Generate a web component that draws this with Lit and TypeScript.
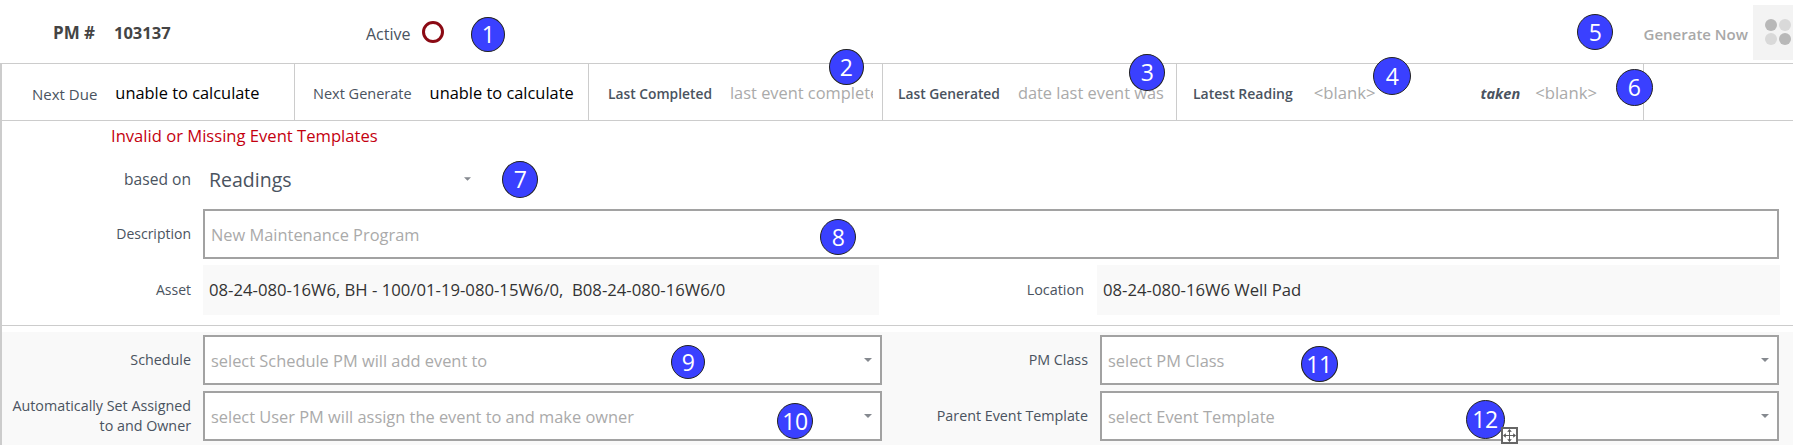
import { LitElement, html, css } from "lit";
import { customElement } from "lit/decorators.js";

const BADGES: [number, number, number, number, number][] = [
  [1, 488, 34, 34, 35],
  [2, 846, 67, 35, 36],
  [3, 1147, 72, 36, 37],
  [4, 1392, 76, 38, 38],
  [5, 1595, 32, 36, 36],
  [6, 1634, 87, 37, 37],
  [7, 520, 179, 36, 37],
  [8, 838, 237, 36, 36],
  [9, 688, 362, 34, 34],
  [10, 795, 421, 36, 36],
  [11, 1319, 364, 37, 36],
  [12, 1485, 419, 39, 39],
];

const caret = html`<svg class="caret" width="8" height="4" viewBox="0 0 8 4"><path d="M0 0H8L4 4Z" fill="#85898f"/></svg>`;

@customElement("app-root")
export class AppRoot extends LitElement {
  static styles = css`
    :host {
      display: block;
      position: relative;
      width: 1793px;
      height: 445px;
      overflow: hidden;
      background: #fff;
      font-family: "Open Sans", "Noto Sans", sans-serif;
      color: #4a5360;
      font-size: 14px;
    }
    .head {
      height: 63px;
      box-sizing: border-box;
      display: flex;
      align-items: center;
    }
    .pm-label { margin-left: 53px; width: 61px; font-weight: 700; font-size: 17px; color: #444; padding-top: 2px; }
    .pm-no { font-weight: 700; font-size: 16.5px; color: #444; width: 252px; padding-top: 1px; }
    .active { font-size: 16px; width: 56px; padding-top: 4px; }
    .ring { width: 22px; height: 22px; box-sizing: border-box; border: 3px solid #8b0a14; border-radius: 50%; margin-top: 1px; }
    .gen { margin-left: auto; font-size: 15px; font-weight: 600; color: #a8a8a8; margin-right: 5px; padding-top: 4px; }
    .apps {
      width: 40px;
      height: 55px;
      align-self: flex-start;
      margin-top: 5px;
      background: #f3f3f3;
      display: grid;
      grid-template-columns: 12px 12px;
      grid-auto-rows: 12px;
      gap: 2px;
      align-content: center;
      padding: 0 0 2px 12px;
      box-sizing: border-box;
    }
    .apps i { border-radius: 50%; background: #d9d9d9; }
    .apps i.d { background: #b8b8b8; }

    .stats {
      height: 58px;
      box-sizing: border-box;
      border-top: 1px solid #ccc;
      border-bottom: 1px solid #ccc;
      border-left: 2px solid #ccc;
      display: flex;
    }
    .cell {
      width: 294px;
      flex: none;
      box-sizing: border-box;
      border-right: 1px solid #ccc;
      display: flex;
      align-items: center;
      gap: 18px;
      white-space: nowrap;
    }
    .c1 { width: 293px; padding-left: 30px; font-size: 15px; }
    .c2 { padding-left: 18px; font-size: 14.5px; }
    .c3 { padding-left: 19px; font-size: 13.8px; }
    .c4 { padding-left: 15px; font-size: 13.8px; }
    .c5 { width: 467px; padding-left: 16px; }
    .cell > span { padding-top: 3px; }
    .cell .val { font-size: 16.4px; color: #000; padding-top: 0; }
    .cell .ph { font-size: 16.4px; color: #aaa; padding-top: 0; }
    .c3 .ph { overflow: hidden; width: 143px; flex: none; }
    .cell .s { font-weight: 600; }
    .c5 .s { margin-right: 3px; }
    .c5 .ph { font-size: 16.7px; }
    .cell .taken { font-weight: 700; font-style: italic; font-size: 14.5px; margin-left: 87px; margin-right: -3px; }

    .form {
      border-left: 2px solid #ccc;
      height: 325px;
      box-sizing: border-box;
    }
    .upper { height: 205px; box-sizing: border-box; border-bottom: 1px solid #ccc; }
    .err { color: #c4000f; font-size: 16.6px; font-weight: 500; padding-left: 109px; height: 33px; line-height: 30px; }
    .row { display: flex; align-items: center; padding-right: 14px; }
    .lbl { width: 189px; flex: none; text-align: right; line-height: 20px; }
    .based { height: 55px; padding-bottom: 5px; box-sizing: border-box; }
    .based .lbl { font-size: 15.6px; }
    .based .pick {
      margin-left: 12px;
      width: 268px;
      padding-left: 6px;
      display: flex;
      align-items: center;
      justify-content: space-between;
      box-sizing: border-box;
      font-size: 19.5px;
      font-weight: 500;
    }
    .box {
      border: 2px solid #a2a2a2;
      height: 50px;
      box-sizing: border-box;
      background: #fff;
      display: flex;
      align-items: center;
      justify-content: space-between;
      padding: 0 8px 0 6px;
      color: #aaa;
      font-size: 16.4px;
      margin-left: 12px;
    }
    .desc { flex: 1; }
    .assets { display: flex; align-items: center; margin-top: 6px; }
    .assets .lbl { font-weight: 500; }
    .ro {
      height: 50px;
      background: #f9f9f9;
      display: flex;
      align-items: center;
      padding: 0 0 1px 6px;
      box-sizing: border-box;
      color: #333;
      font-size: 16.7px;
      margin-left: 12px;
      white-space: pre;
    }
    .ro.a { width: 676px; }
    .ro.b { width: 683px; margin-left: 13px; }
    .lbl.l2 { width: 205px; font-size: 14.4px; }
    .lower {
      margin-top: 6px;
      background: #f9f9f9;
      height: 113px;
      padding-top: 3px;
      box-sizing: border-box;
      display: grid;
      grid-template-columns: 191px 689px 208px 689px;
      grid-auto-rows: 50px;
      row-gap: 6px;
      align-items: center;
    }
    .lower .box { margin-left: 10px; }
    .lower .lbl { width: auto; padding-right: 2px; font-size: 14.3px; }

    .badge {
      position: absolute;
      box-sizing: border-box;
      border: 1px solid #222;
      border-radius: 50%;
      background: #3a40ff;
      color: #fff;
      font-size: 23px;
      display: flex;
      align-items: center;
      justify-content: center;
      letter-spacing: -0.5px;
    }
    .handle {
      position: absolute;
      left: 1501px;
      top: 427px;
      width: 17px;
      height: 17px;
      box-sizing: border-box;
      border: 2px solid #666;
      background: #fff;
      display: flex;
    }
  `;

  render() {
    return html`
      <div class="head">
        <span class="pm-label">PM #</span>
        <span class="pm-no">103137</span>
        <span class="active">Active</span>
        <span class="ring"></span>
        <span class="gen">Generate Now</span>
        <div class="apps"><i class="d"></i><i></i><i></i><i class="d"></i></div>
      </div>
      <div class="stats">
        <div class="cell c1"><span>Next Due</span><span class="val">unable to calculate</span></div>
        <div class="cell c2"><span>Next Generate</span><span class="val">unable to calculate</span></div>
        <div class="cell c3"><span class="s">Last Completed</span><span class="ph">last event completed</span></div>
        <div class="cell c4"><span class="s">Last Generated</span><span class="ph">date last event was</span></div>
        <div class="cell c5">
          <span class="s">Latest Reading</span><span class="ph">&lt;blank&gt;</span>
          <span class="taken">taken</span><span class="ph">&lt;blank&gt;</span>
        </div>
      </div>
      <div class="form">
        <div class="upper">
          <div class="err">Invalid or Missing Event Templates</div>
          <div class="row based">
            <span class="lbl">based on</span>
            <div class="pick">Readings <svg width="7" height="4" viewBox="0 0 8 4"><path d="M0 0H8L4 4Z" fill="#85898f"/></svg></div>
          </div>
          <div class="row">
            <span class="lbl">Description</span>
            <div class="box desc">New Maintenance Program</div>
          </div>
          <div class="assets">
            <span class="lbl">Asset</span>
            <div class="ro a">08-24-080-16W6, BH - 100/01-19-080-15W6/0,  B08-24-080-16W6/0</div>
            <span class="lbl l2">Location</span>
            <div class="ro b">08-24-080-16W6 Well Pad</div>
          </div>
        </div>
        <div class="lower">
          <span class="lbl">Schedule</span>
          <div class="box">select Schedule PM will add event to ${caret}</div>
          <span class="lbl">PM Class</span>
          <div class="box">select PM Class ${caret}</div>
          <span class="lbl">Automatically Set Assigned<br />to and Owner</span>
          <div class="box">select User PM will assign the event to and make owner ${caret}</div>
          <span class="lbl">Parent Event Template</span>
          <div class="box">select Event Template ${caret}</div>
        </div>
      </div>
      ${BADGES.map(
        ([n, x, y, w, h]) => html`<div
          class="badge"
          style="left:${x - w / 2}px;top:${y - h / 2}px;width:${w}px;height:${h}px"
        >${n}</div>`
      )}
      <div class="handle">
        <svg width="13" height="13" viewBox="0 0 14 14">
          <path d="M7 1V13M1 7H13" stroke="#555" stroke-width="1"/>
          <path d="M7 0L9.5 3H4.5ZM7 14L4.5 11H9.5ZM0 7L3 4.5V9.5ZM14 7L11 9.5V4.5Z" fill="#555"/>
        </svg>
      </div>
    `;
  }
}
